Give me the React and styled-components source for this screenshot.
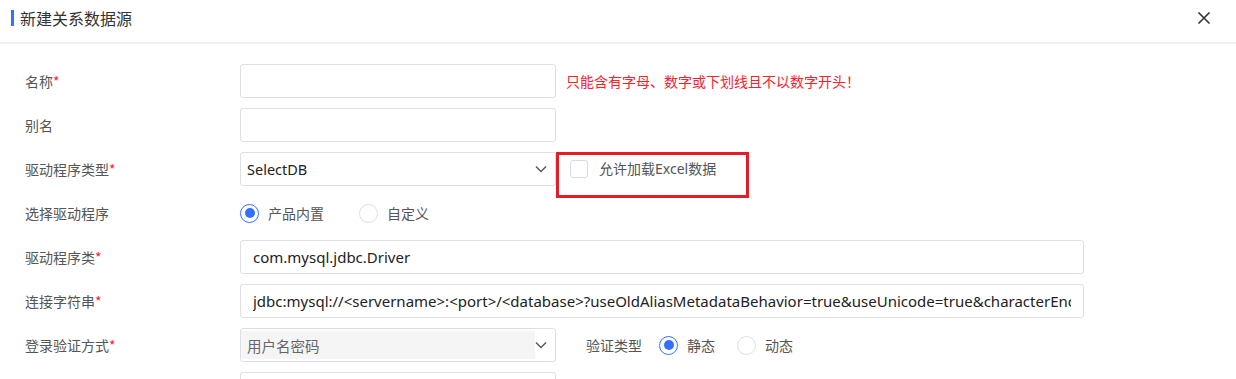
import React from 'react';
import styled, { createGlobalStyle } from 'styled-components';

const GlobalStyle = createGlobalStyle`
  html, body { margin: 0; padding: 0; background: #fff; }
  body {
    font-family: "Noto Sans", "Noto Sans CJK SC", sans-serif;
    font-size: 14px;
    color: #333;
  }
  * { box-sizing: border-box; }
`;

const Dialog = styled.div`
  width: 1236px;
  height: 379px;
  overflow: hidden;
  background: #fff;
`;

const Header = styled.div`
  height: 44px;
  display: flex;
  align-items: center;
  justify-content: space-between;
  padding: 0 24px 6px 11px;
  border-bottom: 2px solid #f0f0f2;
`;

const Title = styled.div`
  display: flex;
  align-items: center;
  gap: 6px;
  font-family: "Noto Sans CJK SC", sans-serif;
  font-size: 16px;
  color: #333;
  &::before {
    content: '';
    width: 3px;
    height: 16px;
    background: #3370ff;
  }
`;

const Close = styled.button`
  border: 0;
  background: none;
  padding: 0;
  width: 16px;
  height: 16px;
  display: flex;
  align-items: center;
  justify-content: center;
  color: #333;
`;

const Form = styled.div`
  display: flex;
  flex-direction: column;
  gap: 10px;
  padding: 20px 0 0 25px;
`;

const Row = styled.div`
  display: flex;
  align-items: center;
  height: 34px;
`;

const Label = styled.div`
  width: 215px;
  flex: none;
  font-family: "Noto Sans CJK SC", sans-serif;
  font-size: 14px;
  color: #555;
  & > i {
    font-style: normal;
    color: #f5222d;
  }
`;

const Input = styled.input`
  width: ${p => (p.$wide ? '844px' : '316px')};
  height: 34px;
  border: 1px solid #dcdfe8;
  border-radius: 3px;
  padding: 0 12px;
  font-family: "Noto Sans", "Noto Sans CJK SC", sans-serif;
  font-size: 15px;
  color: #222;
  background: #fff;
  outline: none;
`;

const Select = styled.div`
  width: 316px;
  height: 34px;
  border: 1px solid #dcdfe8;
  border-radius: 3px;
  display: flex;
  align-items: stretch;
  background: #fff;
  flex: none;
`;

const SelectValue = styled.div`
  flex: 1;
  display: flex;
  align-items: center;
  padding: 0 6px;
  margin: 2px 0;
  font-family: "Noto Sans", "Noto Sans CJK SC", sans-serif;
  font-size: 14.5px;
  color: ${p => (p.$disabled ? '#666' : '#222')};
  background: ${p => (p.$disabled ? '#f5f5f6' : 'transparent')};
`;

const Chevron = styled.div`
  width: 20px;
  display: flex;
  align-items: center;
  justify-content: flex-start;
  color: #555;
`;

const ErrorText = styled.div`
  margin-left: 10px;
  font-family: "Noto Sans CJK SC", sans-serif;
  font-size: 14px;
  color: #f5222d;
`;

const Highlight = styled.div`
  align-self: flex-start;
  width: 193px;
  height: 46px;
  border: 3px solid #e31e26;
  padding: 5px 0 0 11px;
  display: flex;
  align-items: flex-start;
  gap: 11px;
  font-family: "Noto Sans", "Noto Sans CJK SC", sans-serif;
  font-size: 14px;
  color: #555;
  line-height: 18px;
`;

const Checkbox = styled.span`
  width: 18px;
  height: 18px;
  border: 1px solid #d8dbe4;
  border-radius: 3px;
  background: #fff;
  flex: none;
`;

const RadioGroup = styled.div`
  display: flex;
  align-items: center;
`;

const Option = styled.label`
  display: flex;
  align-items: center;
  gap: 9px;
  margin-right: ${p => p.$gap || 0}px;
  font-family: "Noto Sans CJK SC", sans-serif;
  font-size: 14px;
  color: #555;
`;

const Radio = styled.span`
  width: 19px;
  height: 19px;
  border-radius: 50%;
  border: ${p => (p.$checked ? '1.5px solid #3370ff' : '1px solid #dcdfe8')};
  display: flex;
  align-items: center;
  justify-content: center;
  &::after {
    content: '';
    width: 10px;
    height: 10px;
    border-radius: 50%;
    background: ${p => (p.$checked ? '#3370ff' : 'transparent')};
  }
`;

const SubLabel = styled.div`
  margin: 0 17px 0 30px;
  font-family: "Noto Sans CJK SC", sans-serif;
  font-size: 14px;
  color: #555;
`;

const ChevronIcon = () => (
  <svg width="12" height="8" viewBox="0 0 12 8" fill="none">
    <path d="M1 1.5L6 6.5L11 1.5" stroke="currentColor" strokeWidth="1.4" />
  </svg>
);

const Req = ({ children }) => (
  <Label>
    {children}
    <i>*</i>
  </Label>
);

export default function App() {
  return (
    <Dialog>
      <GlobalStyle />
      <Header>
        <Title>新建关系数据源</Title>
        <Close aria-label="close">
          <svg width="14" height="14" viewBox="0 0 14 14">
            <path d="M1.5 1.5L12.5 12.5M12.5 1.5L1.5 12.5" stroke="#333" strokeWidth="1.6" />
          </svg>
        </Close>
      </Header>
      <Form>
        <Row>
          <Req>名称</Req>
          <Input defaultValue="" />
          <ErrorText>只能含有字母、数字或下划线且不以数字开头！</ErrorText>
        </Row>
        <Row>
          <Label>别名</Label>
          <Input defaultValue="" />
        </Row>
        <Row>
          <Req>驱动程序类型</Req>
          <Select>
            <SelectValue>SelectDB</SelectValue>
            <Chevron><ChevronIcon /></Chevron>
          </Select>
          <Highlight>
            <Checkbox />
            <span>允许加载Excel数据</span>
          </Highlight>
        </Row>
        <Row>
          <Label>选择驱动程序</Label>
          <RadioGroup>
            <Option $gap={35}><Radio $checked />产品内置</Option>
            <Option><Radio />自定义</Option>
          </RadioGroup>
        </Row>
        <Row>
          <Req>驱动程序类</Req>
          <Input $wide readOnly value="com.mysql.jdbc.Driver" />
        </Row>
        <Row>
          <Req>连接字符串</Req>
          <Input
            $wide
            readOnly
            value="jdbc:mysql://<servername>:<port>/<database>?useOldAliasMetadataBehavior=true&useUnicode=true&characterEncoding=UTF-8"
          />
        </Row>
        <Row>
          <Req>登录验证方式</Req>
          <Select>
            <SelectValue $disabled>用户名密码</SelectValue>
            <Chevron><ChevronIcon /></Chevron>
          </Select>
          <SubLabel>验证类型</SubLabel>
          <RadioGroup>
            <Option $gap={22}><Radio $checked />静态</Option>
            <Option><Radio />动态</Option>
          </RadioGroup>
        </Row>
        <Row>
          <Label />
          <Input defaultValue="" />
        </Row>
      </Form>
    </Dialog>
  );
}
